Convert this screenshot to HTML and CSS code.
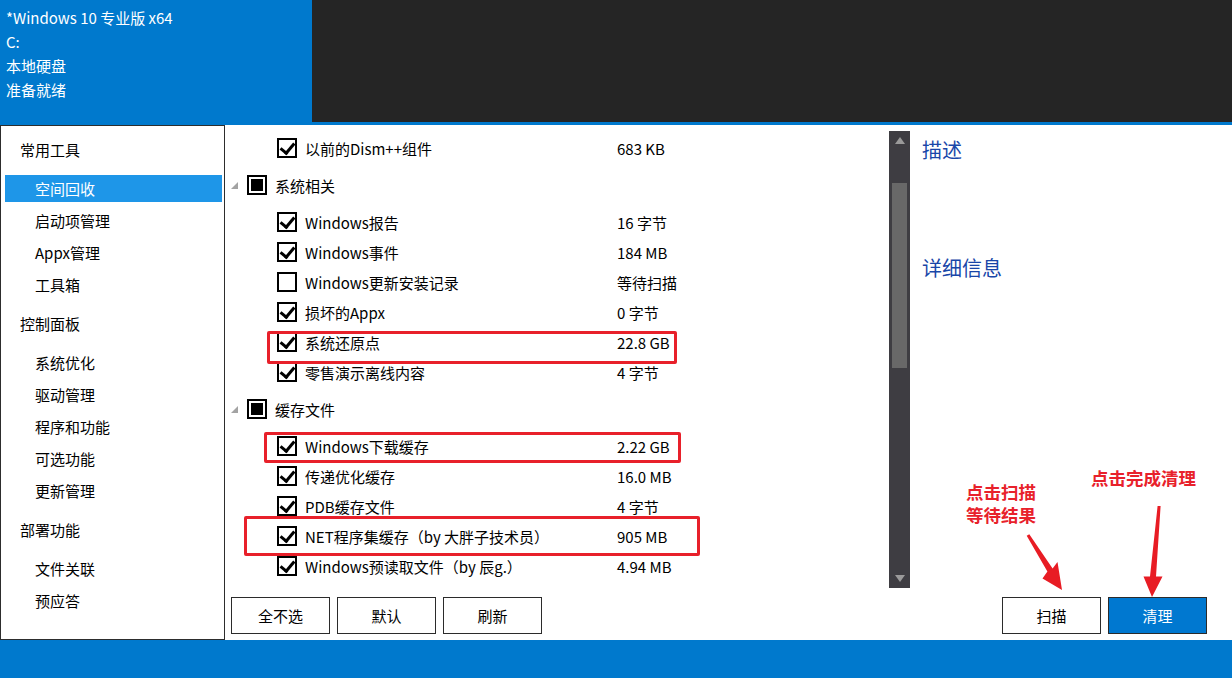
FILE: index.html
```html
<!DOCTYPE html>
<html lang="zh-CN">
<head>
    <meta charset="UTF-8">
    <title>Dism++ 空间回收</title>
    <link rel="stylesheet" href="styles.css">
</head>
<body>
<div class="app">
    <header class="top">
        <div class="sysinfo">
            <div>*Windows 10 专业版 x64</div>
            <div>C:</div>
            <div>本地硬盘</div>
            <div>准备就绪</div>
        </div>
        <div class="top-dark"></div>
    </header>

    <div class="main">
        <nav class="nav">
            <div class="nav-head">常用工具</div>
            <div class="nav-item active">空间回收</div>
            <div class="nav-item">启动项管理</div>
            <div class="nav-item">Appx管理</div>
            <div class="nav-item">工具箱</div>
            <div class="nav-head">控制面板</div>
            <div class="nav-item">系统优化</div>
            <div class="nav-item">驱动管理</div>
            <div class="nav-item">程序和功能</div>
            <div class="nav-item">可选功能</div>
            <div class="nav-item">更新管理</div>
            <div class="nav-head">部署功能</div>
            <div class="nav-item">文件关联</div>
            <div class="nav-item">预应答</div>
        </nav>

        <section class="work">
            <div class="work-top">
                <div class="tree">
                    <div class="row item"><span class="cb on"></span><span class="name">以前的Dism++组件</span><span class="size">683 KB</span></div>

                    <div class="row group"><span class="twisty"></span><span class="cb mixed"><i></i></span><span class="name">系统相关</span></div>
                    <div class="row item"><span class="cb on"></span><span class="name">Windows报告</span><span class="size">16 字节</span></div>
                    <div class="row item"><span class="cb on"></span><span class="name">Windows事件</span><span class="size">184 MB</span></div>
                    <div class="row item"><span class="cb"></span><span class="name">Windows更新安装记录</span><span class="size">等待扫描</span></div>
                    <div class="row item"><span class="cb on"></span><span class="name">损坏的Appx</span><span class="size">0 字节</span></div>
                    <div class="row item"><span class="cb on"></span><span class="name">系统还原点</span><span class="size">22.8 GB</span></div>
                    <div class="row item"><span class="cb on"></span><span class="name">零售演示离线内容</span><span class="size">4 字节</span></div>

                    <div class="row group"><span class="twisty"></span><span class="cb mixed"><i></i></span><span class="name">缓存文件</span></div>
                    <div class="row item"><span class="cb on"></span><span class="name">Windows下载缓存</span><span class="size">2.22 GB</span></div>
                    <div class="row item"><span class="cb on"></span><span class="name">传递优化缓存</span><span class="size">16.0 MB</span></div>
                    <div class="row item"><span class="cb on"></span><span class="name">PDB缓存文件</span><span class="size">4 字节</span></div>
                    <div class="row item"><span class="cb on"></span><span class="name">NET程序集缓存（by 大胖子技术员）</span><span class="size">905 MB</span></div>
                    <div class="row item"><span class="cb on"></span><span class="name">Windows预读取文件（by 辰g.）</span><span class="size">4.94 MB</span></div>
                </div>

                <div class="vscroll">
                    <span class="arrow up"></span>
                    <span class="thumb"></span>
                    <span class="arrow down"></span>
                </div>

                <aside class="info">
                    <h3>描述</h3>
                    <h3 class="details">详细信息</h3>
                </aside>
            </div>

            <div class="actions">
                <div class="btn-group">
                    <button class="btn">全不选</button>
                    <button class="btn">默认</button>
                    <button class="btn">刷新</button>
                </div>
                <div class="btn-group">
                    <button class="btn">扫描</button>
                    <button class="btn primary">清理</button>
                </div>
            </div>
        </section>
    </div>

    <footer class="statusbar"></footer>

    <!-- red hand-drawn marks over the screenshot -->
    <div class="mark box-restore"></div>
    <div class="mark box-download"></div>
    <div class="mark box-net"></div>
    <div class="note note-scan">点击扫描<br>等待结果</div>
    <div class="note note-clean">点击完成清理</div>
    <svg class="arrows" width="1232" height="678" viewBox="0 0 1232 678">
        <polygon points="1026.7,535.8 1029.3,534.2 1052.6,568.4 1057.5,562 1062,590 1042.5,578.5 1047.4,571.6" />
        <polygon points="1157.6,506 1160.6,506 1156,576.5 1162.5,576.5 1152,597 1143.5,576.5 1150,576.5" />
    </svg>
</div>
</body>
</html>
```

FILE: styles.css
```css
* {
    box-sizing: border-box;
}

body {
    margin: 0;
    font-family: "Noto Sans CJK SC", "Noto Sans", sans-serif;
    font-size: 15px;
    color: #000;
    background: #fff;
}

.app {
    position: relative;
    width: 1232px;
    height: 678px;
    overflow: hidden;
    display: flex;
    flex-direction: column;
}

/* top bar */
.top {
    display: flex;
    height: 125px;
    background: #0079cd;
}

.sysinfo {
    width: 312px;
    padding: 6px 0 0 6px;
    color: #fff;
    line-height: 24px;
}

.top-dark {
    flex: 1;
    height: 122px;
    background: #252525;
}

/* body */
.main {
    display: flex;
    height: 515px;
}

.nav {
    width: 225px;
    border: 1px solid #2d2d2d;
    padding: 10px 2px 0 4px;
}

.nav-head {
    height: 27px;
    line-height: 27px;
    padding-left: 15px;
    margin: 12px 0 12px;
}

.nav-head:first-child {
    margin-top: 0;
}

.nav-item {
    height: 27px;
    line-height: 27px;
    padding-left: 30px;
    margin-bottom: 5px;
}

.nav-item.active {
    background: #1e96e8;
    color: #fff;
}

.work {
    flex: 1;
    display: flex;
    flex-direction: column;
}

.work-top {
    flex: 1;
    display: flex;
}

/* tree list */
.tree {
    width: 664px;
    padding-top: 8px;
    overflow: hidden;
}

.row {
    display: flex;
    align-items: center;
    height: 30px;
}

.row.item {
    padding-left: 52px;
}

.row.group {
    padding-left: 6px;
    margin: 7px 0;
}

.twisty {
    width: 0;
    height: 0;
    border-right: 7px solid #a3a3a3;
    border-top: 7px solid transparent;
    margin: 0 9px 0 0;
}

.cb {
    position: relative;
    width: 20px;
    height: 20px;
    border: 2px solid #000;
    background: #fff;
    flex-shrink: 0;
}

.cb.on::after {
    content: "";
    position: absolute;
    left: 4px;
    top: 0;
    width: 6px;
    height: 11px;
    border-right: 3px solid #000;
    border-bottom: 3px solid #000;
    transform: rotate(40deg);
}

.cb.mixed {
    padding: 2px;
}

.cb.mixed i {
    display: block;
    width: 100%;
    height: 100%;
    background: #000;
}

.row .name {
    margin-left: 8px;
    white-space: nowrap;
}

.row.item .name {
    width: 312px;
}

/* scrollbar */
.vscroll {
    width: 21px;
    height: 457px;
    margin-top: 6px;
    padding: 6px 0;
    background: #3e3d42;
    display: flex;
    flex-direction: column;
    align-items: center;
}

.arrow {
    width: 0;
    height: 0;
    border-left: 5.5px solid transparent;
    border-right: 5.5px solid transparent;
}

.arrow.up {
    border-bottom: 7px solid #9a9a9a;
}

.arrow.down {
    border-top: 7px solid #9a9a9a;
    margin-top: auto;
}

.thumb {
    width: 15px;
    height: 185px;
    margin-top: 39px;
    background: #686868;
}

/* description pane */
.info {
    flex: 1;
    padding: 10px 0 0 12px;
}

.info h3 {
    margin: 0;
    font-size: 20px;
    font-weight: normal;
    line-height: 30px;
    color: #1846a8;
}

.info h3.details {
    margin-top: 88px;
}

/* buttons */
.actions {
    display: flex;
    justify-content: space-between;
    padding: 0 25px 6px 6px;
}

.btn-group {
    display: flex;
    gap: 7px;
}

.btn {
    width: 99px;
    height: 37px;
    border: 1px solid #2b2b2b;
    background: #fff;
    font: inherit;
    font-size: 15px;
    color: #000;
    padding: 0;
}

.btn.primary {
    background: #0078d0;
    color: #fff;
}

.statusbar {
    height: 38px;
    background: #0079cd;
}

/* annotations */
.mark {
    position: absolute;
    border: 3px solid #e8202a;
    border-radius: 2px;
}

.box-restore {
    left: 267px;
    top: 331px;
    width: 410px;
    height: 33px;
}

.box-download {
    left: 264px;
    top: 432px;
    width: 417px;
    height: 31px;
}

.box-net {
    left: 244px;
    top: 516px;
    width: 456px;
    height: 40px;
}

.note {
    position: absolute;
    color: #e8212b;
    font-weight: bold;
    font-size: 17.5px;
    line-height: 23px;
    text-shadow: 0 0 2px #fff;
}

.note-scan {
    left: 966px;
    top: 480px;
}

.note-clean {
    left: 1091px;
    top: 466px;
}

.arrows {
    position: absolute;
    left: 0;
    top: 0;
    pointer-events: none;
}

.arrows polygon {
    fill: #e81c24;
}
```
